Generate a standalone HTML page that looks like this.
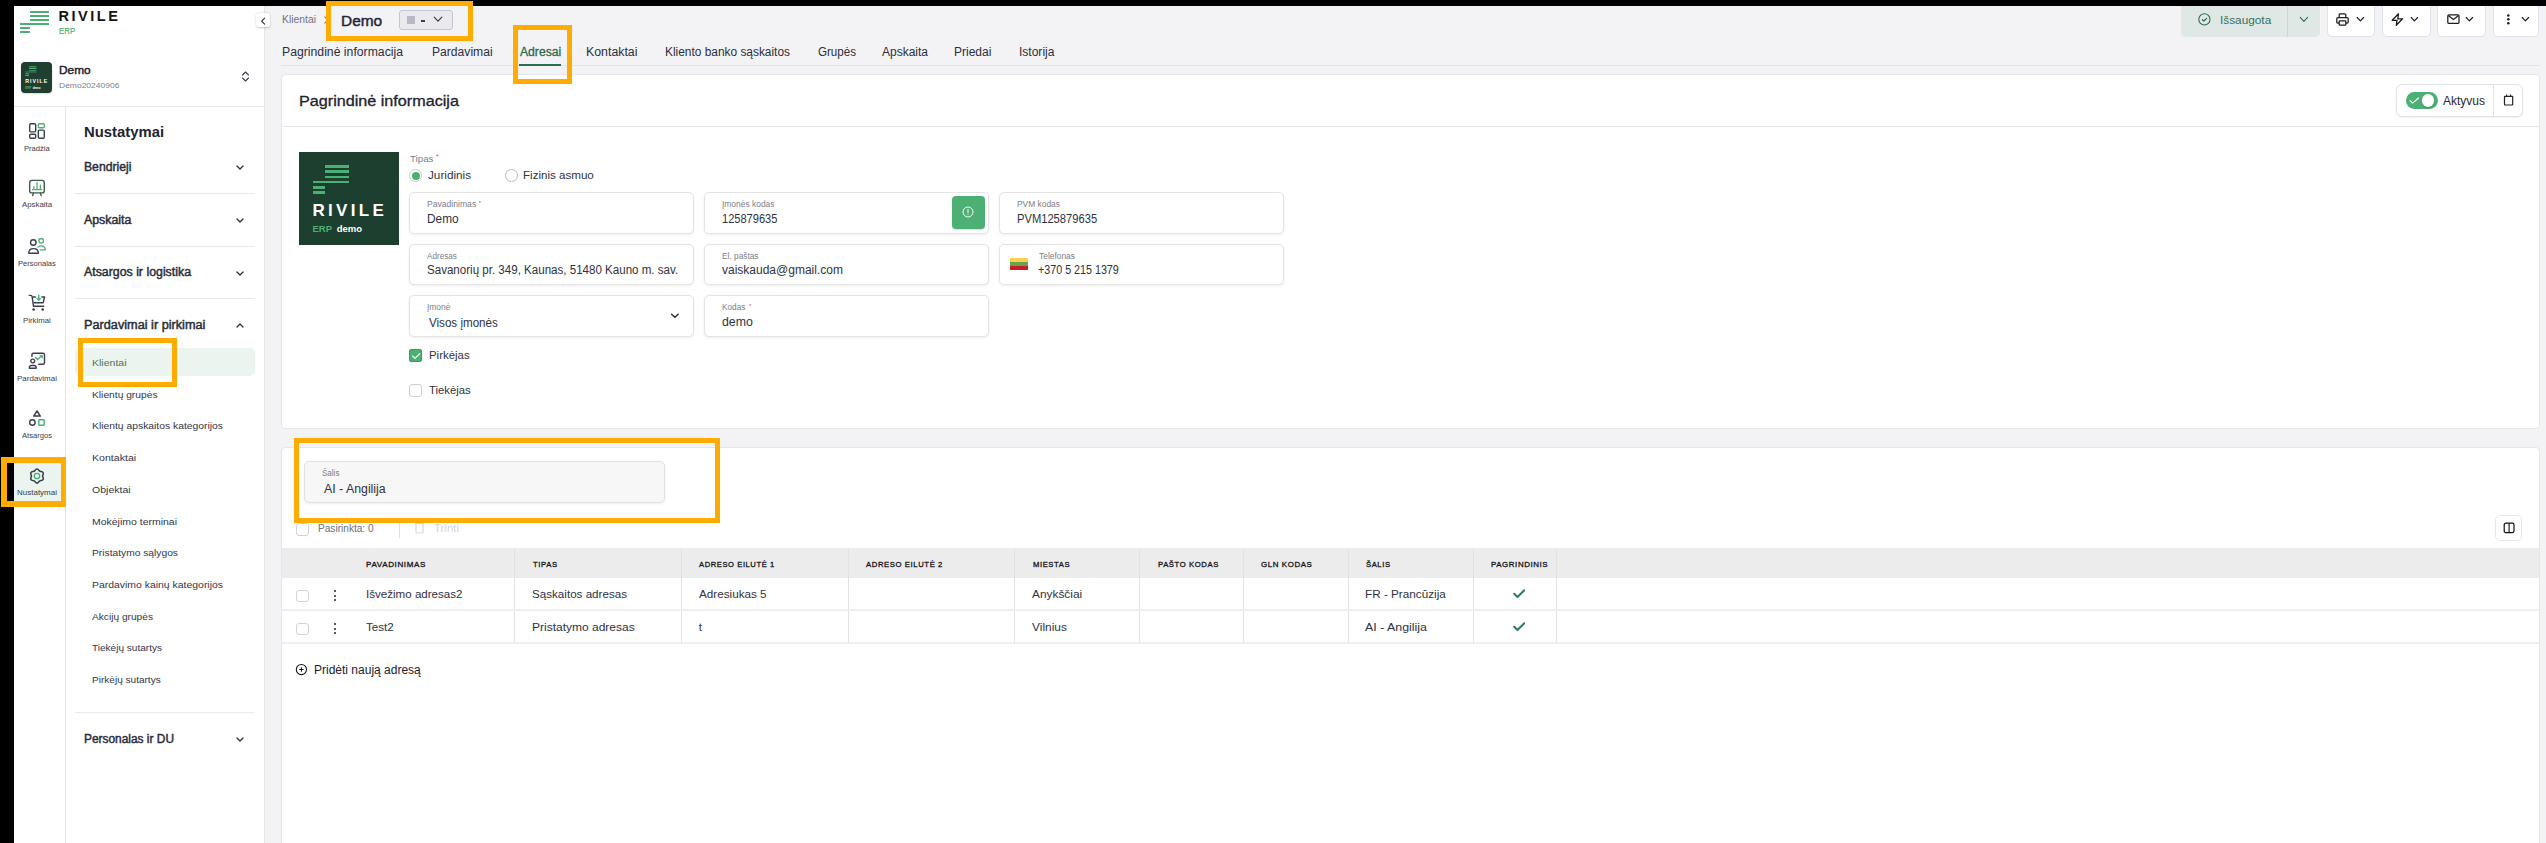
<!DOCTYPE html>
<html><head><meta charset="utf-8"><style>
html,body{margin:0;padding:0;}
body{width:2546px;height:843px;position:relative;overflow:hidden;background:#000;font-family:"Liberation Sans", sans-serif;}
.t{position:absolute;white-space:nowrap;line-height:1;transform-origin:0 0;display:inline-block;}
</style></head><body>
<div style="position:absolute;left:14px;top:6px;width:2532px;height:837px;background:#f3f3f6;"></div>
<div style="position:absolute;left:14px;top:6px;width:250px;height:101px;background:#fff;"></div>
<div style="position:absolute;left:14px;top:106px;width:250px;height:1px;background:#e7e7e8;"></div>
<div style="position:absolute;left:14px;top:107px;width:51px;height:736px;background:#fff;"></div>
<div style="position:absolute;left:65px;top:107px;width:1px;height:736px;background:#e7e7e8;"></div>
<div style="position:absolute;left:66px;top:107px;width:198px;height:736px;background:#fff;"></div>
<div style="position:absolute;left:264px;top:6px;width:1px;height:837px;background:#e6e6e7;"></div>
<div style="position:absolute;left:30px;top:11px;width:19px;height:2px;background:#4caf73;"></div>
<div style="position:absolute;left:30px;top:15px;width:19px;height:2px;background:#4caf73;"></div>
<div style="position:absolute;left:30px;top:19px;width:19px;height:2px;background:#4caf73;"></div>
<div style="position:absolute;left:20px;top:23px;width:29px;height:2px;background:#4caf73;"></div>
<div style="position:absolute;left:20px;top:27px;width:10px;height:2.2px;background:#4caf73;"></div>
<div style="position:absolute;left:20px;top:31px;width:10px;height:2.2px;background:#4caf73;"></div>
<span class="t" id="t0" style="left:58.40px;top:9.00px;font-size:14.5px;font-weight:700;color:#131313;letter-spacing:2.55px;">RIVILE</span>
<span class="t" id="t1" style="transform:scaleX(0.8749);left:59.00px;top:27.00px;font-size:9px;font-weight:400;color:#4aae6f;-webkit-text-stroke:0.15px #4aae6f;">ERP</span>
<div style="position:absolute;left:21px;top:62px;width:31px;height:31px;border-radius:4px;overflow:hidden;background:#1f3f31;box-shadow:0 1px 2px rgba(0,0,0,.15);"><div style="position:absolute;left:0;top:0;width:100px;height:93px;transform:scale(0.31,0.333);transform-origin:0 0;"><div style="position:absolute;left:25.6px;top:13.2px;width:24.5px;height:2.8px;background:#4caf73;"></div><div style="position:absolute;left:25.6px;top:18.4px;width:24.5px;height:2.8px;background:#4caf73;"></div><div style="position:absolute;left:25.6px;top:23.6px;width:24.5px;height:2.8px;background:#4caf73;"></div><div style="position:absolute;left:13.5px;top:28.7px;width:36.6px;height:2.8px;background:#4caf73;"></div><div style="position:absolute;left:13.5px;top:34.1px;width:12.4px;height:2.8px;background:#4caf73;"></div><div style="position:absolute;left:13.5px;top:39.2px;width:12.4px;height:2.8px;background:#4caf73;"></div><span class="t" style="left:13.5px;top:49.6px;font-size:17px;font-weight:700;color:#fff;letter-spacing:3.3px;">RIVILE</span><span class="t" style="left:13.5px;top:71.5px;font-size:9.5px;font-weight:700;color:#4caf73;">ERP</span><span class="t" style="left:37.7px;top:71.5px;font-size:9.5px;font-weight:700;color:#fff;">demo</span></div></div>
<span class="t" id="t2" style="transform:scaleX(1.0297);left:58.60px;top:65.00px;font-size:11.5px;font-weight:400;color:#1f2230;-webkit-text-stroke:0.45px #1f2230;">Demo</span>
<span class="t" id="t3" style="transform:scaleX(1.0608);left:58.60px;top:82.00px;font-size:8px;font-weight:400;color:#7d8190;">Demo20240906</span>
<svg style="position:absolute;left:240px;top:70px;" width="11" height="13" viewBox="0 0 11 13" fill="none"><path d="M2.5 5 L5.5 2 L8.5 5 M2.5 8 L5.5 11 L8.5 8" stroke="#3a3d4a" stroke-width="1.1" stroke-linecap="round" stroke-linejoin="round"/></svg>
<div style="position:absolute;left:14px;top:457px;width:51px;height:50px;background:#ebf4ef;"></div>
<svg style="position:absolute;left:25px;top:118px;" width="24" height="24" viewBox="0 0 24 24" fill="none"><rect x="4.7" y="5.7" width="6" height="8.2" rx="1.2" stroke="#3b3e4d" stroke-width="1.4"/><rect x="4.7" y="16.3" width="6" height="4" rx="1.2" stroke="#3b3e4d" stroke-width="1.4"/><rect x="13.3" y="5.7" width="6" height="4" rx="1.2" stroke="#4caf73" stroke-width="1.4"/><rect x="13.3" y="12.1" width="6" height="8.2" rx="1.2" stroke="#3b3e4d" stroke-width="1.4"/></svg>
<span class="t" id="t4" style="transform:scaleX(1.0143);left:24.10px;top:145.00px;font-size:7.5px;font-weight:400;color:#3a3d4c;">Pradžia</span>
<svg style="position:absolute;left:25px;top:175px;" width="24" height="24" viewBox="0 0 24 24" fill="none"><rect x="4.65" y="5.35" width="14.6" height="12.5" rx="2.2" stroke="#3d5a4c" stroke-width="1.4"/><path d="M8.4 18.3 L7.6 20.6 M15.4 18.3 L16.2 20.6" stroke="#3d5a4c" stroke-width="1.4" stroke-linecap="round"/><path d="M8.8 14.7 V11.6 M12 14.7 V7.6 M15.4 14.7 V10.2 M7.6 14.7 H16.6" stroke="#4caf73" stroke-width="1.3" stroke-linecap="round"/></svg>
<span class="t" id="t5" style="transform:scaleX(1.0423);left:22.00px;top:201.00px;font-size:7.5px;font-weight:400;color:#3a3d4c;">Apskaita</span>
<svg style="position:absolute;left:25px;top:234px;" width="24" height="24" viewBox="0 0 24 24" fill="none"><circle cx="8.3" cy="8.5" r="2.75" stroke="#3b3e4d" stroke-width="1.4"/><path d="M3.75 19.25 C3.75 16.5 5.5 14.65 8.55 14.65 C11.6 14.65 13.35 16.5 13.35 19.25 Z" stroke="#3b3e4d" stroke-width="1.4" stroke-linejoin="round"/><circle cx="16.2" cy="6.8" r="2.3" stroke="#4caf73" stroke-width="1.3"/><path d="M13 13.1 C13.7 12.3 14.8 11.9 16.2 11.9 C18.6 11.9 20.2 13.6 20.2 15.9 H15.4" stroke="#4caf73" stroke-width="1.3" stroke-linecap="round" stroke-linejoin="round"/></svg>
<span class="t" id="t6" style="transform:scaleX(1.0072);left:18.10px;top:260.00px;font-size:7.5px;font-weight:400;color:#3a3d4c;">Personalas</span>
<svg style="position:absolute;left:25px;top:291px;" width="24" height="24" viewBox="0 0 24 24" fill="none"><path d="M4.3 4.4 H5.8 Q6.9 4.4 7.1 5.5 L8.5 15.3 H18.8" stroke="#3b3e4d" stroke-width="1.4" stroke-linecap="round" stroke-linejoin="round"/><path d="M8.2 6 H10.4 M16.9 6 H19.6 L18.2 11.7 H9" stroke="#3b3e4d" stroke-width="1.4" stroke-linecap="round" stroke-linejoin="round"/><circle cx="8.6" cy="18.5" r="1.3" fill="#3b3e4d"/><circle cx="17.7" cy="18.5" r="1.3" fill="#3b3e4d"/><path d="M13.7 4.2 V8" stroke="#4caf73" stroke-width="1.4" stroke-linecap="round"/><path d="M11.4 7.4 H16 L13.7 10 Z" fill="#4caf73" stroke="#4caf73" stroke-width="0.6" stroke-linejoin="round"/></svg>
<span class="t" id="t7" style="transform:scaleX(1.0385);left:23.15px;top:317.00px;font-size:7.5px;font-weight:400;color:#3a3d4c;">Pirkimai</span>
<svg style="position:absolute;left:25px;top:348px;" width="24" height="24" viewBox="0 0 24 24" fill="none"><path d="M6.9 8.4 V6.8 Q6.9 5.3 8.4 5.3 H18 Q19.5 5.3 19.5 6.8 V14.8 Q19.5 16.3 18 16.3 H13.8" stroke="#3b3e4d" stroke-width="1.4" stroke-linecap="round"/><circle cx="7.7" cy="13" r="1.9" stroke="#3b3e4d" stroke-width="1.4"/><path d="M4.4 20.2 V19.3 Q4.4 17.5 6.3 17.5 H9.2 Q11.1 17.5 11.1 19.3 V20.2 Z" stroke="#3b3e4d" stroke-width="1.4" stroke-linejoin="round"/><path d="M10.4 9.4 L12.6 11.6 L15.3 9" stroke="#4caf73" stroke-width="1.4" stroke-linecap="round" stroke-linejoin="round"/><path d="M14.6 7.3 H17.5 V10.2 Z" fill="#4caf73" stroke="#4caf73" stroke-width="0.7" stroke-linejoin="round"/></svg>
<span class="t" id="t8" style="transform:scaleX(1.0662);left:17.00px;top:375.00px;font-size:7.5px;font-weight:400;color:#3a3d4c;">Pardavimai</span>
<svg style="position:absolute;left:25px;top:406px;" width="24" height="24" viewBox="0 0 24 24" fill="none"><path d="M12 5 L15.3 10.1 H8.7 Z" stroke="#3b3e4d" stroke-width="1.5" stroke-linejoin="round"/><circle cx="7.4" cy="16.5" r="2.75" stroke="#3b3e4d" stroke-width="1.4"/><rect x="13.8" y="13.8" width="5.4" height="5.4" rx="0.6" stroke="#4caf73" stroke-width="1.4"/></svg>
<span class="t" id="t9" style="transform:scaleX(1.0132);left:22.00px;top:432.00px;font-size:7.5px;font-weight:400;color:#3a3d4c;">Atsargos</span>
<svg style="position:absolute;left:25px;top:466px;" width="24" height="24" viewBox="0 0 24 24" fill="none"><path d="M13.00 3.28 Q14.41 5.82 17.33 5.78 Q18.32 6.35 18.32 7.50 Q16.82 10.00 18.32 12.50 Q18.32 13.65 17.33 14.22 Q14.41 14.18 13.00 16.73 Q12.00 17.30 11.00 16.73 Q9.59 14.18 6.67 14.22 Q5.68 13.65 5.68 12.50 Q7.18 10.00 5.68 7.50 Q5.68 6.35 6.67 5.78 Q9.59 5.82 11.00 3.28 Q12.00 2.70 13.00 3.28 Z" stroke="#3b3e4d" stroke-width="1.5" stroke-linejoin="round"/><circle cx="12" cy="10" r="2.7" stroke="#4caf73" stroke-width="1.3"/></svg>
<span class="t" id="t10" style="transform:scaleX(1.0662);left:17.00px;top:489.00px;font-size:7.5px;font-weight:400;color:#3a3d4c;">Nustatymai</span>
<span class="t" id="t11" style="transform:scaleX(0.9894);left:83.80px;top:124.00px;font-size:15px;font-weight:700;color:#1f2230;">Nustatymai</span>
<span class="t" id="t12" style="transform:scaleX(1.0149);left:83.80px;top:161.00px;font-size:12px;font-weight:400;color:#2a2d3b;-webkit-text-stroke:0.45px #2a2d3b;">Bendrieji</span>
<svg style="position:absolute;left:236px;top:165.4px;" width="8" height="5" viewBox="0 0 8 5" fill="none"><path d="M1 1 L4 4 L7 1" stroke="#2a2d3a" stroke-width="1.3" stroke-linecap="round" stroke-linejoin="round"/></svg>
<span class="t" id="t13" style="transform:scaleX(1.0297);left:83.80px;top:214.00px;font-size:12px;font-weight:400;color:#2a2d3b;-webkit-text-stroke:0.45px #2a2d3b;">Apskaita</span>
<svg style="position:absolute;left:236px;top:218.4px;" width="8" height="5" viewBox="0 0 8 5" fill="none"><path d="M1 1 L4 4 L7 1" stroke="#2a2d3a" stroke-width="1.3" stroke-linecap="round" stroke-linejoin="round"/></svg>
<span class="t" id="t14" style="transform:scaleX(1.0284);left:83.80px;top:266.00px;font-size:12px;font-weight:400;color:#2a2d3b;-webkit-text-stroke:0.45px #2a2d3b;">Atsargos ir logistika</span>
<svg style="position:absolute;left:236px;top:270.8px;" width="8" height="5" viewBox="0 0 8 5" fill="none"><path d="M1 1 L4 4 L7 1" stroke="#2a2d3a" stroke-width="1.3" stroke-linecap="round" stroke-linejoin="round"/></svg>
<span class="t" id="t15" style="transform:scaleX(1.0584);left:83.80px;top:319.00px;font-size:12px;font-weight:400;color:#2a2d3b;-webkit-text-stroke:0.45px #2a2d3b;">Pardavimai ir pirkimai</span>
<svg style="position:absolute;left:236px;top:323.25px;" width="8" height="5" viewBox="0 0 8 5" fill="none"><path d="M1 4 L4 1 L7 4" stroke="#2a2d3a" stroke-width="1.3" stroke-linecap="round" stroke-linejoin="round"/></svg>
<span class="t" id="t16" style="transform:scaleX(0.9922);left:83.80px;top:733.00px;font-size:12px;font-weight:400;color:#2a2d3b;-webkit-text-stroke:0.45px #2a2d3b;">Personalas ir DU</span>
<svg style="position:absolute;left:236px;top:737.3px;" width="8" height="5" viewBox="0 0 8 5" fill="none"><path d="M1 1 L4 4 L7 1" stroke="#2a2d3a" stroke-width="1.3" stroke-linecap="round" stroke-linejoin="round"/></svg>
<div style="position:absolute;left:75px;top:193px;width:180px;height:1px;background:#e9e9ea;"></div>
<div style="position:absolute;left:75px;top:246px;width:180px;height:1px;background:#e9e9ea;"></div>
<div style="position:absolute;left:75px;top:298px;width:180px;height:1px;background:#e9e9ea;"></div>
<div style="position:absolute;left:75px;top:712px;width:180px;height:1px;background:#e9e9ea;"></div>
<div style="position:absolute;left:75px;top:348.3px;width:180px;height:27.9px;background:#ebf4ee;border-radius:5px;"></div>
<span class="t" id="t17" style="transform:scaleX(1.1068);left:91.60px;top:358.00px;font-size:9.5px;font-weight:400;color:#3f7a5c;">Klientai</span>
<span class="t" id="t18" style="transform:scaleX(1.0785);left:91.60px;top:390.00px;font-size:9.5px;font-weight:400;color:#33364a;">Klientų grupės</span>
<span class="t" id="t19" style="transform:scaleX(1.0880);left:91.60px;top:421.00px;font-size:9.5px;font-weight:400;color:#33364a;">Klientų apskaitos kategorijos</span>
<span class="t" id="t20" style="transform:scaleX(1.1155);left:91.60px;top:453.00px;font-size:9.5px;font-weight:400;color:#33364a;">Kontaktai</span>
<span class="t" id="t21" style="transform:scaleX(1.1102);left:91.60px;top:485.00px;font-size:9.5px;font-weight:400;color:#33364a;">Objektai</span>
<span class="t" id="t22" style="transform:scaleX(1.1028);left:91.60px;top:517.00px;font-size:9.5px;font-weight:400;color:#33364a;">Mokėjimo terminai</span>
<span class="t" id="t23" style="transform:scaleX(1.0786);left:91.60px;top:548.00px;font-size:9.5px;font-weight:400;color:#33364a;">Pristatymo sąlygos</span>
<span class="t" id="t24" style="transform:scaleX(1.0977);left:91.60px;top:580.00px;font-size:9.5px;font-weight:400;color:#33364a;">Pardavimo kainų kategorijos</span>
<span class="t" id="t25" style="transform:scaleX(1.0696);left:91.60px;top:612.00px;font-size:9.5px;font-weight:400;color:#33364a;">Akcijų grupės</span>
<span class="t" id="t26" style="transform:scaleX(1.0579);left:91.60px;top:643.00px;font-size:9.5px;font-weight:400;color:#33364a;">Tiekėjų sutartys</span>
<span class="t" id="t27" style="transform:scaleX(1.0579);left:91.60px;top:675.00px;font-size:9.5px;font-weight:400;color:#33364a;">Pirkėjų sutartys</span>
<div style="position:absolute;left:256px;top:12.6px;width:14px;height:14.5px;background:#fff;border-radius:3px;box-shadow:0 0.5px 2px rgba(0,0,0,.22);"></div>
<svg style="position:absolute;left:260px;top:16.5px;" width="6" height="8" viewBox="0 0 6 8" fill="none"><path d="M4.6 1.2 L1.6 4.2 L4.6 7.2" stroke="#2a2d3a" stroke-width="1.1" stroke-linecap="round" stroke-linejoin="round"/></svg>
<span class="t" id="t28" style="transform:scaleX(1.0362);left:281.60px;top:15.00px;font-size:10px;font-weight:400;color:#6f7280;">Klientai</span>
<svg style="position:absolute;left:323px;top:15px;" width="6" height="10" viewBox="0 0 6 10" fill="none"><path d="M1.5 1.5 L4.5 5 L1.5 8.5" stroke="#6f7280" stroke-width="1.1"/></svg>
<span class="t" id="t29" style="transform:scaleX(1.0271);left:341.40px;top:13.00px;font-size:15px;font-weight:400;color:#232636;-webkit-text-stroke:0.45px #232636;">Demo</span>
<div style="position:absolute;left:399px;top:10.3px;width:53.5px;height:19.6px;box-sizing:border-box;background:#e9e9ee;border:1px solid #c6c6d0;border-radius:3px;"></div>
<div style="position:absolute;left:407px;top:16px;width:8px;height:8px;background:#b9b9c6;"></div>
<div style="position:absolute;left:420.8px;top:20.2px;width:4px;height:1.4px;background:#3a3d4a;"></div>
<svg style="position:absolute;left:433.3px;top:16px;" width="10" height="7" viewBox="0 0 10 7" fill="none"><path d="M1.2 1.2 L5 5.2 L8.8 1.2" stroke="#3a3d4a" stroke-width="1.2" stroke-linecap="round" stroke-linejoin="round"/></svg>
<span class="t" id="t30" style="transform:scaleX(1.0191);left:281.60px;top:46.00px;font-size:12px;font-weight:400;color:#2b2e3c;">Pagrindinė informacija</span>
<span class="t" id="t31" style="transform:scaleX(1.0095);left:431.80px;top:46.00px;font-size:12px;font-weight:400;color:#2b2e3c;">Pardavimai</span>
<span class="t" id="t32" style="transform:scaleX(1.0126);left:519.70px;top:46.00px;font-size:12px;font-weight:400;color:#2a6a4c;-webkit-text-stroke:0.3px #2a6a4c;">Adresai</span>
<span class="t" id="t33" style="transform:scaleX(1.0290);left:586.20px;top:46.00px;font-size:12px;font-weight:400;color:#2b2e3c;">Kontaktai</span>
<span class="t" id="t34" style="transform:scaleX(0.9914);left:664.50px;top:46.00px;font-size:12px;font-weight:400;color:#2b2e3c;">Kliento banko sąskaitos</span>
<span class="t" id="t35" style="transform:scaleX(0.9655);left:817.90px;top:46.00px;font-size:12px;font-weight:400;color:#2b2e3c;">Grupės</span>
<span class="t" id="t36" style="transform:scaleX(0.9993);left:882.10px;top:46.00px;font-size:12px;font-weight:400;color:#2b2e3c;">Apskaita</span>
<span class="t" id="t37" style="transform:scaleX(1.0011);left:954.40px;top:46.00px;font-size:12px;font-weight:400;color:#2b2e3c;">Priedai</span>
<span class="t" id="t38" style="transform:scaleX(1.0016);left:1018.90px;top:46.00px;font-size:12px;font-weight:400;color:#2b2e3c;">Istorija</span>
<div style="position:absolute;left:281px;top:65px;width:2259px;height:1px;background:#e4e4e5;"></div>
<div style="position:absolute;left:519px;top:64px;width:42px;height:2px;background:#2a6f4e;"></div>
<div style="position:absolute;left:2181px;top:-5px;width:139px;height:41.5px;background:#e0e8e6;border-radius:5px;"></div>
<div style="position:absolute;left:2287px;top:0px;width:1px;height:36.5px;background:#c9d8d2;"></div>
<svg style="position:absolute;left:2198px;top:13px;" width="13" height="13" viewBox="0 0 13 13" fill="none"><circle cx="6.4" cy="6.4" r="5.6" stroke="#2d6b4f" stroke-width="1.1"/><path d="M4.4 6.7 L5.9 8 L8.6 5.3" stroke="#2d6b4f" stroke-width="1.2" stroke-linecap="round" stroke-linejoin="round"/></svg>
<span class="t" id="t39" style="transform:scaleX(1.0266);left:2219.90px;top:15.00px;font-size:11.5px;font-weight:400;color:#34705f;">Išsaugota</span>
<svg style="position:absolute;left:2299px;top:16px;" width="10" height="7" viewBox="0 0 10 7" fill="none"><path d="M1.2 1.4 L4.9 5.3 L8.6 1.4" stroke="#2d6b4f" stroke-width="1.1" stroke-linecap="round" stroke-linejoin="round"/></svg>
<div style="position:absolute;left:2327px;top:-5px;width:48px;height:41.5px;box-sizing:border-box;background:#fff;border:1px solid #dde2ec;border-radius:5px;"></div>
<div style="position:absolute;left:2382px;top:-5px;width:48.5px;height:41.5px;box-sizing:border-box;background:#fff;border:1px solid #dde2ec;border-radius:5px;"></div>
<div style="position:absolute;left:2437px;top:-5px;width:48.5px;height:41.5px;box-sizing:border-box;background:#fff;border:1px solid #dde2ec;border-radius:5px;"></div>
<div style="position:absolute;left:2493px;top:-5px;width:46.30000000000018px;height:41.5px;box-sizing:border-box;background:#fff;border:1px solid #dde2ec;border-radius:5px;"></div>
<svg style="position:absolute;left:2336px;top:13px;" width="13" height="13" viewBox="0 0 13 13" fill="none"><path d="M3.2 4.5 V1.8 Q3.2 0.8 4.2 0.8 H8.8 Q9.8 0.8 9.8 1.8 V4.5" stroke="#1c1c22" stroke-width="1.25"/><path d="M3 10 H1.8 Q0.8 10 0.8 9 V5.8 Q0.8 4.6 2 4.6 H11 Q12.2 4.6 12.2 5.8 V9 Q12.2 10 11.2 10 H10" stroke="#1c1c22" stroke-width="1.25"/><rect x="3.2" y="7.8" width="6.6" height="4.4" rx="0.8" stroke="#1c1c22" stroke-width="1.25"/></svg>
<svg style="position:absolute;left:2355.5px;top:16px;" width="9" height="7" viewBox="0 0 9 7" fill="none"><path d="M1.2 1.5 L4.4 4.9 L7.6 1.5" stroke="#1c1c22" stroke-width="1.15" stroke-linecap="round" stroke-linejoin="round"/></svg>
<svg style="position:absolute;left:2391px;top:13px;" width="13" height="13" viewBox="0 0 13 13" fill="none"><path d="M7.5 0.8 L1.2 7.3 H6 L5.3 12.3 L11.6 5.8 H6.8 Z" stroke="#1c1c22" stroke-width="1.3" stroke-linejoin="round"/></svg>
<svg style="position:absolute;left:2410.3px;top:16px;" width="9" height="7" viewBox="0 0 9 7" fill="none"><path d="M1.2 1.5 L4.4 4.9 L7.6 1.5" stroke="#1c1c22" stroke-width="1.15" stroke-linecap="round" stroke-linejoin="round"/></svg>
<svg style="position:absolute;left:2447px;top:14px;" width="13" height="10" viewBox="0 0 13 10" fill="none"><rect x="0.8" y="0.8" width="11.2" height="8.6" rx="1.2" stroke="#1c1c22" stroke-width="1.25"/><path d="M1.2 1.6 L6.4 5.4 L11.6 1.6" stroke="#1c1c22" stroke-width="1.3"/></svg>
<svg style="position:absolute;left:2465px;top:16px;" width="9" height="7" viewBox="0 0 9 7" fill="none"><path d="M1.2 1.5 L4.4 4.9 L7.6 1.5" stroke="#1c1c22" stroke-width="1.15" stroke-linecap="round" stroke-linejoin="round"/></svg>
<svg style="position:absolute;left:2505px;top:13px;" width="7" height="13" viewBox="0 0 7 13" fill="none"><circle cx="3.3" cy="2.5" r="1.25" fill="#1c1c22"/><circle cx="3.3" cy="6.3" r="1.25" fill="#1c1c22"/><circle cx="3.3" cy="10.2" r="1.25" fill="#1c1c22"/></svg>
<svg style="position:absolute;left:2521.4px;top:16px;" width="9" height="7" viewBox="0 0 9 7" fill="none"><path d="M1.2 1.5 L4.4 4.9 L7.6 1.5" stroke="#1c1c22" stroke-width="1.15" stroke-linecap="round" stroke-linejoin="round"/></svg>
<div style="position:absolute;left:281px;top:74px;width:2259px;height:355px;box-sizing:border-box;background:#fff;border:1px solid #e6e6e8;border-radius:4px;"></div>
<span class="t" id="t40" style="transform:scaleX(1.1543);left:299.20px;top:94.00px;font-size:14px;font-weight:400;color:#1f2230;-webkit-text-stroke:0.3px #1f2230;">Pagrindinė informacija</span>
<div style="position:absolute;left:282px;top:126px;width:2257px;height:1px;background:#e8e8ea;"></div>
<div style="position:absolute;left:2396px;top:84px;width:127px;height:33px;box-sizing:border-box;background:#fff;border:1px solid #e3e3e5;border-radius:6px;box-shadow:0 1px 2px rgba(0,0,0,.06);"></div>
<div style="position:absolute;left:2493px;top:85px;width:1px;height:31px;background:#e3e3e5;"></div>
<div style="position:absolute;left:2406px;top:92px;width:32px;height:17px;background:#4caf73;border-radius:9px;"></div>
<div style="position:absolute;left:2422px;top:94.3px;width:12.3px;height:12.3px;background:#fff;border-radius:50%;box-shadow:0 1px 1.5px rgba(0,0,0,.18);"></div>
<svg style="position:absolute;left:2409px;top:97px;" width="11" height="8" viewBox="0 0 11 8" fill="none"><path d="M1 3.6 L3.6 6.2 L9.5 1" stroke="#fff" stroke-width="1.05" stroke-linecap="round" stroke-linejoin="round"/></svg>
<span class="t" id="t41" style="transform:scaleX(0.9996);left:2443.20px;top:95.00px;font-size:12px;font-weight:400;color:#262938;">Aktyvus</span>
<svg style="position:absolute;left:2503px;top:93.5px;" width="11" height="12.5" viewBox="0 0 11 12.5" fill="none"><rect x="1.5" y="2.4" width="8.2" height="8.6" rx="0.5" stroke="#222" stroke-width="1.2"/><path d="M3.6 0.6 V2.8 M7.6 0.6 V2.8" stroke="#222" stroke-width="1.1"/></svg>
<div style="position:absolute;left:299px;top:152px;width:100px;height:93px;background:#1c3f30;"><div style="position:absolute;left:25.6px;top:13.2px;width:24.5px;height:2.8px;background:#4caf73;"></div><div style="position:absolute;left:25.6px;top:18.4px;width:24.5px;height:2.8px;background:#4caf73;"></div><div style="position:absolute;left:25.6px;top:23.6px;width:24.5px;height:2.8px;background:#4caf73;"></div><div style="position:absolute;left:13.5px;top:28.7px;width:36.6px;height:2.8px;background:#4caf73;"></div><div style="position:absolute;left:13.5px;top:34.1px;width:12.4px;height:2.8px;background:#4caf73;"></div><div style="position:absolute;left:13.5px;top:39.2px;width:12.4px;height:2.8px;background:#4caf73;"></div><span class="t" style="left:13.5px;top:49.6px;font-size:17px;font-weight:700;color:#fff;letter-spacing:3.3px;">RIVILE</span><span class="t" style="left:13.5px;top:71.5px;font-size:9.5px;font-weight:700;color:#4caf73;">ERP</span><span class="t" style="left:37.7px;top:71.5px;font-size:9.5px;font-weight:700;color:#fff;">demo</span></div>
<span class="t" id="t42" style="transform:scaleX(1.0790);left:409.70px;top:155.00px;font-size:9px;font-weight:400;color:#7b7e8a;">Tipas</span>
<span class="t" id="t43" style="left:436.00px;top:153.00px;font-size:7px;font-weight:400;color:#e0504f;">*</span>
<div style="position:absolute;left:409px;top:169px;width:13px;height:13px;box-sizing:border-box;border:1px solid #c9ccd0;border-radius:50%;"></div>
<div style="position:absolute;left:411.5px;top:171.5px;width:8px;height:8px;background:#4caf73;border-radius:50%;"></div>
<span class="t" id="t44" style="transform:scaleX(1.0193);left:427.90px;top:170.00px;font-size:11.5px;font-weight:400;color:#2f3242;">Juridinis</span>
<div style="position:absolute;left:505px;top:169px;width:13px;height:13px;box-sizing:border-box;border:1px solid #b9bcc4;border-radius:50%;"></div>
<span class="t" id="t45" style="transform:scaleX(1.0069);left:523.20px;top:170.00px;font-size:11.5px;font-weight:400;color:#2f3242;">Fizinis asmuo</span>
<div style="position:absolute;left:409px;top:192px;width:285px;height:42px;box-sizing:border-box;background:#fff;border:1px solid #e4e4e5;border-radius:5px;box-shadow:0 1px 3px rgba(0,0,0,.07);"></div>
<span class="t" id="t46" style="transform:scaleX(1.0109);left:427.00px;top:200.00px;font-size:8.5px;font-weight:400;color:#7b7e8a;">Pavadinimas</span>
<span class="t" id="t47" style="left:478.80px;top:200.00px;font-size:6px;font-weight:400;color:#e0504f;">*</span>
<span class="t" id="t48" style="transform:scaleX(0.9870);left:427.00px;top:213.00px;font-size:12px;font-weight:400;color:#2f3242;">Demo</span>
<div style="position:absolute;left:704px;top:192px;width:285px;height:42px;box-sizing:border-box;background:#fff;border:1px solid #e4e4e5;border-radius:5px;box-shadow:0 1px 3px rgba(0,0,0,.07);"></div>
<span class="t" id="t49" style="transform:scaleX(0.9920);left:721.70px;top:200.00px;font-size:8.5px;font-weight:400;color:#7b7e8a;">Įmonės kodas</span>
<span class="t" id="t50" style="transform:scaleX(0.9221);left:721.70px;top:213.00px;font-size:12px;font-weight:400;color:#2f3242;">125879635</span>
<div style="position:absolute;left:952.2px;top:196px;width:32.5px;height:32.8px;background:#4caf73;border-radius:4px;box-shadow:0 1px 2px rgba(0,0,0,.15);"></div>
<svg style="position:absolute;left:962.4px;top:206.4px;" width="12" height="12" viewBox="0 0 12 12" fill="none"><circle cx="6" cy="6" r="5" stroke="#fff" stroke-width="0.95"/><path d="M6 3.5 V6.6" stroke="#fff" stroke-width="1" stroke-linecap="round"/><circle cx="6" cy="8.3" r="0.55" fill="#fff"/></svg>
<div style="position:absolute;left:999px;top:192px;width:285px;height:42px;box-sizing:border-box;background:#fff;border:1px solid #e4e4e5;border-radius:5px;box-shadow:0 1px 3px rgba(0,0,0,.07);"></div>
<span class="t" id="t51" style="transform:scaleX(0.9892);left:1017.00px;top:200.00px;font-size:8.5px;font-weight:400;color:#7b7e8a;">PVM kodas</span>
<span class="t" id="t52" style="transform:scaleX(0.9306);left:1017.00px;top:213.00px;font-size:12px;font-weight:400;color:#2f3242;">PVM125879635</span>
<div style="position:absolute;left:409px;top:244px;width:285px;height:41px;box-sizing:border-box;background:#fff;border:1px solid #e4e4e5;border-radius:5px;box-shadow:0 1px 3px rgba(0,0,0,.07);"></div>
<span class="t" id="t53" style="transform:scaleX(0.9587);left:427.00px;top:252.00px;font-size:8.5px;font-weight:400;color:#7b7e8a;">Adresas</span>
<span class="t" id="t54" style="transform:scaleX(0.9635);left:427.00px;top:264.00px;font-size:12px;font-weight:400;color:#2f3242;">Savanorių pr. 349, Kaunas, 51480 Kauno m. sav.</span>
<div style="position:absolute;left:704px;top:244px;width:285px;height:41px;box-sizing:border-box;background:#fff;border:1px solid #e4e4e5;border-radius:5px;box-shadow:0 1px 3px rgba(0,0,0,.07);"></div>
<span class="t" id="t55" style="transform:scaleX(0.9778);left:721.70px;top:252.00px;font-size:8.5px;font-weight:400;color:#7b7e8a;">El. paštas</span>
<span class="t" id="t56" style="transform:scaleX(0.9999);left:721.70px;top:264.00px;font-size:12px;font-weight:400;color:#2f3242;">vaiskauda@gmail.com</span>
<div style="position:absolute;left:999px;top:244px;width:285px;height:41px;box-sizing:border-box;background:#fff;border:1px solid #e4e4e5;border-radius:5px;box-shadow:0 1px 3px rgba(0,0,0,.07);"></div>
<div style="position:absolute;left:1010px;top:257.8px;width:17.8px;height:4px;background:#f7d44a;"></div>
<div style="position:absolute;left:1010px;top:261.8px;width:17.8px;height:4px;background:#6aa24b;"></div>
<div style="position:absolute;left:1010px;top:265.8px;width:17.8px;height:4px;background:#c91a2e;"></div>
<span class="t" id="t57" style="transform:scaleX(0.9893);left:1038.70px;top:252.00px;font-size:8.5px;font-weight:400;color:#7b7e8a;">Telefonas</span>
<span class="t" id="t58" style="transform:scaleX(0.8936);left:1037.50px;top:264.00px;font-size:12px;font-weight:400;color:#2f3242;">+370 5 215 1379</span>
<div style="position:absolute;left:409px;top:295px;width:285px;height:42px;box-sizing:border-box;background:#fff;border:1px solid #e4e4e5;border-radius:5px;box-shadow:0 1px 3px rgba(0,0,0,.07);"></div>
<span class="t" id="t59" style="transform:scaleX(0.9905);left:427.00px;top:303.00px;font-size:8.5px;font-weight:400;color:#7b7e8a;">Įmonė</span>
<span class="t" id="t60" style="transform:scaleX(0.9669);left:428.60px;top:317.00px;font-size:12px;font-weight:400;color:#2f3242;">Visos įmonės</span>
<svg style="position:absolute;left:670px;top:312px;" width="10" height="7" viewBox="0 0 10 7" fill="none"><path d="M1.6 2.2 L4.9 5.2 L8.2 2.2" stroke="#26262c" stroke-width="1.4" stroke-linecap="round" stroke-linejoin="round"/></svg>
<div style="position:absolute;left:704px;top:295px;width:285px;height:42px;box-sizing:border-box;background:#fff;border:1px solid #e4e4e5;border-radius:5px;box-shadow:0 1px 3px rgba(0,0,0,.07);"></div>
<span class="t" id="t61" style="transform:scaleX(0.9706);left:721.70px;top:303.00px;font-size:8.5px;font-weight:400;color:#7b7e8a;">Kodas</span>
<span class="t" id="t62" style="left:749.00px;top:303.00px;font-size:6px;font-weight:400;color:#e0504f;">*</span>
<span class="t" id="t63" style="transform:scaleX(1.0289);left:721.70px;top:316.00px;font-size:12px;font-weight:400;color:#2f3242;">demo</span>
<div style="position:absolute;left:409px;top:349px;width:13px;height:13px;background:#4caf73;border-radius:3px;box-shadow:inset 0 0 0 1px #3f9a62;"></div>
<svg style="position:absolute;left:410.5px;top:350.5px;" width="10" height="10" viewBox="0 0 10 10" fill="none"><path d="M1.5 4.8 L4 7.3 L8.8 2.6" stroke="#fff" stroke-width="1.1" stroke-linecap="round" stroke-linejoin="round"/></svg>
<span class="t" id="t64" style="transform:scaleX(0.9925);left:428.60px;top:350.00px;font-size:11.5px;font-weight:400;color:#2f3242;">Pirkėjas</span>
<div style="position:absolute;left:409px;top:384px;width:13px;height:13px;box-sizing:border-box;border:1px solid #d0d0d4;border-radius:3px;background:#fff;"></div>
<span class="t" id="t65" style="transform:scaleX(0.9810);left:428.60px;top:385.00px;font-size:11.5px;font-weight:400;color:#2f3242;">Tiekėjas</span>
<div style="position:absolute;left:281px;top:447px;width:2259px;height:420px;box-sizing:border-box;background:#fff;border:1px solid #e6e6e8;border-radius:4px;"></div>
<div style="position:absolute;left:304px;top:461px;width:361px;height:42px;box-sizing:border-box;background:#f7f7f7;border:1px solid #e2e2e2;border-radius:5px;box-shadow:0 1px 3px rgba(0,0,0,.07);"></div>
<span class="t" id="t66" style="transform:scaleX(0.9437);left:321.90px;top:469.00px;font-size:8.5px;font-weight:400;color:#7b7e8a;">Šalis</span>
<span class="t" id="t67" style="transform:scaleX(1.0278);left:323.50px;top:483.00px;font-size:12px;font-weight:400;color:#2f3242;">AI - Angilija</span>
<div style="position:absolute;left:296px;top:523px;width:13px;height:13px;box-sizing:border-box;border:1px solid #d3d3d5;border-radius:3px;"></div>
<span class="t" id="t68" style="transform:scaleX(1.0103);left:317.80px;top:524.00px;font-size:10px;font-weight:400;color:#6c6f7c;">Pasirinkta: 0</span>
<div style="position:absolute;left:399.3px;top:518.2px;width:1px;height:19.4px;background:#e0e0e3;"></div>
<svg style="position:absolute;left:414px;top:521px;" width="11" height="13" viewBox="0 0 11 13" fill="none"><path d="M1 2.5 H10 M2 2.5 V11 Q2 12 3 12 H8 Q9 12 9 11 V2.5 M4 2.5 V1 H7 V2.5" stroke="#d8d8dc" stroke-width="1.2"/></svg>
<span class="t" id="t69" style="transform:scaleX(1.1437);left:434.30px;top:524.00px;font-size:10px;font-weight:400;color:#d4d4d8;">Trinti</span>
<div style="position:absolute;left:2495px;top:515px;width:27px;height:26px;box-sizing:border-box;border:1px solid #e8e8e8;border-radius:5px;background:#fff;"></div>
<svg style="position:absolute;left:2502.5px;top:521.5px;" width="12" height="12" viewBox="0 0 12 12" fill="none"><rect x="1.2" y="1.2" width="9.8" height="9.4" rx="1.6" stroke="#111" stroke-width="1.2"/><path d="M6.1 1.3 V10.6" stroke="#111" stroke-width="1.1"/></svg>
<div style="position:absolute;left:282px;top:548px;width:2257px;height:29.6px;background:#ececec;"></div>
<div style="position:absolute;left:514px;top:548px;width:1px;height:95.2px;background:#e2e2e4;"></div>
<div style="position:absolute;left:681px;top:548px;width:1px;height:95.2px;background:#e2e2e4;"></div>
<div style="position:absolute;left:848px;top:548px;width:1px;height:95.2px;background:#e2e2e4;"></div>
<div style="position:absolute;left:1014px;top:548px;width:1px;height:95.2px;background:#e2e2e4;"></div>
<div style="position:absolute;left:1139px;top:548px;width:1px;height:95.2px;background:#e2e2e4;"></div>
<div style="position:absolute;left:1243px;top:548px;width:1px;height:95.2px;background:#e2e2e4;"></div>
<div style="position:absolute;left:1348px;top:548px;width:1px;height:95.2px;background:#e2e2e4;"></div>
<div style="position:absolute;left:1473px;top:548px;width:1px;height:95.2px;background:#e2e2e4;"></div>
<div style="position:absolute;left:1556px;top:548px;width:1px;height:95.2px;background:#e2e2e4;"></div>
<div style="position:absolute;left:282px;top:609px;width:2257px;height:2px;background:#efeff0;"></div>
<div style="position:absolute;left:282px;top:642px;width:2257px;height:2px;background:#efeff0;"></div>
<span class="t" id="t70" style="transform:scaleX(1.0317);left:365.80px;top:561.00px;font-size:7.8px;font-weight:400;color:#141418;letter-spacing:0.6px;-webkit-text-stroke:0.3px #141418;">PAVADINIMAS</span>
<span class="t" id="t71" style="transform:scaleX(0.9858);left:532.70px;top:561.00px;font-size:7.8px;font-weight:400;color:#141418;letter-spacing:0.6px;-webkit-text-stroke:0.3px #141418;">TIPAS</span>
<span class="t" id="t72" style="transform:scaleX(0.9730);left:699.20px;top:561.00px;font-size:7.8px;font-weight:400;color:#141418;letter-spacing:0.6px;-webkit-text-stroke:0.3px #141418;">ADRESO EILUTĖ 1</span>
<span class="t" id="t73" style="transform:scaleX(0.9884);left:865.80px;top:561.00px;font-size:7.8px;font-weight:400;color:#141418;letter-spacing:0.6px;-webkit-text-stroke:0.3px #141418;">ADRESO EILUTĖ 2</span>
<span class="t" id="t74" style="transform:scaleX(0.9799);left:1032.70px;top:561.00px;font-size:7.8px;font-weight:400;color:#141418;letter-spacing:0.6px;-webkit-text-stroke:0.3px #141418;">MIESTAS</span>
<span class="t" id="t75" style="transform:scaleX(0.9857);left:1157.60px;top:561.00px;font-size:7.8px;font-weight:400;color:#141418;letter-spacing:0.6px;-webkit-text-stroke:0.3px #141418;">PAŠTO KODAS</span>
<span class="t" id="t76" style="transform:scaleX(1.0117);left:1261.30px;top:561.00px;font-size:7.8px;font-weight:400;color:#141418;letter-spacing:0.6px;-webkit-text-stroke:0.3px #141418;">GLN KODAS</span>
<span class="t" id="t77" style="transform:scaleX(0.9797);left:1365.70px;top:561.00px;font-size:7.8px;font-weight:400;color:#141418;letter-spacing:0.6px;-webkit-text-stroke:0.3px #141418;">ŠALIS</span>
<span class="t" id="t78" style="transform:scaleX(1.0085);left:1490.60px;top:561.00px;font-size:7.8px;font-weight:400;color:#141418;letter-spacing:0.6px;-webkit-text-stroke:0.3px #141418;">PAGRINDINIS</span>
<span class="t" id="t79" style="transform:scaleX(1.0065);left:366.00px;top:589.00px;font-size:11.5px;font-weight:400;color:#2f3242;">Išvežimo adresas2</span>
<span class="t" id="t80" style="transform:scaleX(1.0110);left:532.30px;top:589.00px;font-size:11.5px;font-weight:400;color:#2f3242;">Sąskaitos adresas</span>
<span class="t" id="t81" style="transform:scaleX(1.0168);left:698.80px;top:589.00px;font-size:11.5px;font-weight:400;color:#2f3242;">Adresiukas 5</span>
<span class="t" id="t82" style="transform:scaleX(1.0334);left:1032.30px;top:589.00px;font-size:11.5px;font-weight:400;color:#2f3242;">Anykščiai</span>
<span class="t" id="t83" style="transform:scaleX(1.0196);left:1365.30px;top:589.00px;font-size:11.5px;font-weight:400;color:#2f3242;">FR - Prancūzija</span>
<div style="position:absolute;left:296px;top:589.5px;width:12.5px;height:12.5px;box-sizing:border-box;border:1px solid #d3d3d8;border-radius:3px;background:#fff;"></div>
<div style="position:absolute;left:333.8px;top:590.0px;width:2.3px;height:2.3px;background:#1f2230;border-radius:50%;"></div>
<div style="position:absolute;left:333.8px;top:594.6px;width:2.3px;height:2.3px;background:#1f2230;border-radius:50%;"></div>
<div style="position:absolute;left:333.8px;top:599.2px;width:2.3px;height:2.3px;background:#1f2230;border-radius:50%;"></div>
<svg style="position:absolute;left:1512.5px;top:589px;" width="12.5" height="9.5" viewBox="0 0 12.5 9.5" fill="none"><path d="M1.2 4.8 L4.5 8 L11.3 1.2" stroke="#2e7a55" stroke-width="2" stroke-linecap="round" stroke-linejoin="round"/></svg>
<span class="t" id="t84" style="transform:scaleX(1.0073);left:366.00px;top:622.00px;font-size:11.5px;font-weight:400;color:#2f3242;">Test2</span>
<span class="t" id="t85" style="transform:scaleX(1.0433);left:532.30px;top:622.00px;font-size:11.5px;font-weight:400;color:#2f3242;">Pristatymo adresas</span>
<span class="t" id="t86" style="left:698.80px;top:622.00px;font-size:11.5px;font-weight:400;color:#2f3242;">t</span>
<span class="t" id="t87" style="transform:scaleX(1.0365);left:1032.30px;top:622.00px;font-size:11.5px;font-weight:400;color:#2f3242;">Vilnius</span>
<span class="t" id="t88" style="transform:scaleX(1.0777);left:1365.30px;top:622.00px;font-size:11.5px;font-weight:400;color:#2f3242;">AI - Angilija</span>
<div style="position:absolute;left:296px;top:622.5px;width:12.5px;height:12.5px;box-sizing:border-box;border:1px solid #d3d3d8;border-radius:3px;background:#fff;"></div>
<div style="position:absolute;left:333.8px;top:623.0px;width:2.3px;height:2.3px;background:#1f2230;border-radius:50%;"></div>
<div style="position:absolute;left:333.8px;top:627.6px;width:2.3px;height:2.3px;background:#1f2230;border-radius:50%;"></div>
<div style="position:absolute;left:333.8px;top:632.2px;width:2.3px;height:2.3px;background:#1f2230;border-radius:50%;"></div>
<svg style="position:absolute;left:1512.5px;top:622px;" width="12.5" height="9.5" viewBox="0 0 12.5 9.5" fill="none"><path d="M1.2 4.8 L4.5 8 L11.3 1.2" stroke="#2e7a55" stroke-width="2" stroke-linecap="round" stroke-linejoin="round"/></svg>
<svg style="position:absolute;left:295px;top:663px;" width="13" height="13" viewBox="0 0 13 13" fill="none"><circle cx="6.4" cy="6.5" r="5.1" stroke="#141420" stroke-width="1.05"/><path d="M6.4 4.3 V8.7 M4.2 6.5 H8.6" stroke="#141420" stroke-width="1.05"/></svg>
<span class="t" id="t89" style="transform:scaleX(1.0006);left:313.60px;top:664.00px;font-size:12px;font-weight:400;color:#1a1c28;">Pridėti naują adresą</span>
<div style="position:absolute;left:0px;top:0px;width:2546px;height:6px;background:#000;"></div>
<div style="position:absolute;left:0px;top:0px;width:14px;height:843px;background:#000;"></div>
<div style="position:absolute;left:326px;top:1px;width:147px;height:40px;box-sizing:border-box;border:5px solid #ffab00;"></div>
<div style="position:absolute;left:513px;top:25px;width:59px;height:59px;box-sizing:border-box;border:5px solid #ffab00;"></div>
<div style="position:absolute;left:78px;top:338px;width:98.5px;height:49px;box-sizing:border-box;border:5px solid #ffab00;"></div>
<div style="position:absolute;left:1px;top:457px;width:65px;height:50px;box-sizing:border-box;border-style:solid;border-color:#ffab00;border-width:6px 5px 6px 6px;"></div>
<div style="position:absolute;left:294px;top:438px;width:426px;height:85px;box-sizing:border-box;border:5px solid #ffab00;"></div>
</body></html>
